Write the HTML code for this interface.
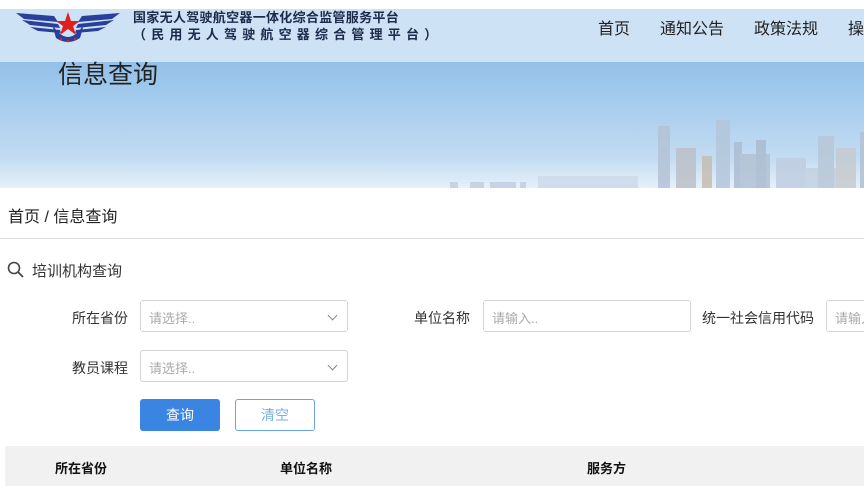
<!DOCTYPE html>
<html><head><meta charset="utf-8"><style>
*{margin:0;padding:0;box-sizing:border-box}
body{width:864px;height:486px;overflow:hidden;background:#fff;font-family:"Liberation Sans","Noto Sans CJK SC",sans-serif;color:#333;position:relative}
.abs{position:absolute}
.banner{left:0;top:9px;width:864px;height:179px;background:linear-gradient(#94c0e8 53px,#9fc8ec 80px,#c3dcf2 150px,#e6f0fa 179px)}
.hdr{left:0;top:9px;width:864px;height:53px;background:#cde2f5}
.t1{left:133px;top:7px;font-size:13px;font-weight:bold;color:#1d2a4a;letter-spacing:0.3px;white-space:nowrap}
.t2{left:133px;top:24px;font-size:13px;font-weight:bold;color:#1d2a4a;letter-spacing:5.2px;white-space:nowrap}
.nav{top:15px;font-size:16px;color:#222}
.box{border:1px solid #d4d4d4;border-radius:3px;height:32px;font-size:13px;color:#aaa;padding:7px 8px;background:#fff}
.lbl{font-size:14px;color:#333;text-align:right}
.arr{position:absolute;right:11px;top:11px;width:7px;height:7px;border-right:1.3px solid #888;border-bottom:1.3px solid #888;transform:rotate(45deg)}
.th{top:458px;font-size:13px;font-weight:bold;color:#111}
</style></head><body>
<div class="abs banner"></div>
<div class="abs hdr"></div>
<svg class="abs" style="left:14px;top:10px" width="108" height="34" viewBox="0 0 108 34">
<path d="M2 3 L40 6 L44 12 L10 9Z M8 10 L44 14 L46 18 L16 15Z M16 17 L46 20 L47 23 L24 21Z" fill="#2a3f9a"/>
<path d="M106 3 L68 6 L64 12 L98 9Z M100 10 L64 14 L62 18 L92 15Z M92 17 L62 20 L61 23 L84 21Z" fill="#2a3f9a"/>
<path d="M38 14 Q54 40 70 14 L66 28 Q54 36 42 28Z" fill="#2a3f9a"/>
<path d="M54 2 L57 11 L66 11 L59 16 L62 25 L54 19 L46 25 L49 16 L42 11 L51 11Z" fill="#e02020"/>
<circle cx="47" cy="29" r="1.3" fill="#e02020"/><circle cx="54" cy="31" r="1.3" fill="#e02020"/><circle cx="61" cy="29" r="1.3" fill="#e02020"/>
</svg>
<div class="abs t1">国家无人驾驶航空器一体化综合监管服务平台</div>
<div class="abs t2">（民用无人驾驶航空器综合管理平台）</div>
<div class="abs nav" style="left:598px">首页</div>
<div class="abs nav" style="left:660px">通知公告</div>
<div class="abs nav" style="left:754px">政策法规</div>
<div class="abs nav" style="left:848px">操</div>
<div class="abs" style="left:58px;top:55px;font-size:25px;color:#222">信息查询</div>
<svg class="abs" style="left:440px;top:118px" width="424" height="70" viewBox="0 0 424 70" opacity="0.85">
<g fill="#c0cfe0">
<rect x="10" y="64" width="8" height="6"/><rect x="30" y="64" width="14" height="6"/><rect x="50" y="64" width="26" height="6"/><rect x="80" y="64" width="6" height="6"/>
<rect x="98" y="58" width="100" height="12" fill="#cddbea"/>
<rect x="218" y="8" width="12" height="62" fill="#b3c3d6"/><rect x="236" y="30" width="20" height="40" fill="#bcc0c8"/>
<rect x="262" y="38" width="10" height="32" fill="#c6bdb2"/><rect x="276" y="2" width="14" height="68" fill="#b4c6da"/>
<rect x="294" y="24" width="8" height="46" fill="#abbdd2"/><rect x="300" y="36" width="30" height="34" fill="#b2c2d4"/>
<rect x="316" y="22" width="10" height="48" fill="#aabcd0"/><rect x="336" y="40" width="30" height="30" fill="#bfcee0"/>
<rect x="366" y="50" width="30" height="20" fill="#c2d2e2"/><rect x="378" y="18" width="16" height="52" fill="#b8c7d8"/>
<rect x="396" y="30" width="20" height="40" fill="#c6cbcf"/><rect x="420" y="14" width="4" height="56" fill="#b3c2d4"/>
</g></svg>
<div class="abs" style="left:8px;top:203px;font-size:16px;color:#222">首页 / 信息查询</div>
<div class="abs" style="left:0;top:238px;width:864px;height:1px;background:#ddd"></div>
<svg class="abs" style="left:7px;top:261px" width="18" height="18" viewBox="0 0 18 18"><circle cx="7" cy="7" r="5.5" fill="none" stroke="#444" stroke-width="1.6"/><path d="M11 11 L16 16" stroke="#444" stroke-width="1.8"/></svg>
<div class="abs" style="left:32px;top:260px;font-size:15px;color:#333">培训机构查询</div>
<div class="abs lbl" style="left:40px;top:308px;width:88px">所在省份</div>
<div class="abs box" style="left:140px;top:300px;width:208px">请选择..<span class="arr"></span></div>
<div class="abs lbl" style="left:380px;top:308px;width:90px">单位名称</div>
<div class="abs box" style="left:483px;top:300px;width:208px">请输入..</div>
<div class="abs lbl" style="left:690px;top:308px;width:124px">统一社会信用代码</div>
<div class="abs box" style="left:826px;top:300px;width:60px">请输入</div>
<div class="abs lbl" style="left:40px;top:358px;width:88px">教员课程</div>
<div class="abs box" style="left:140px;top:350px;width:208px">请选择..<span class="arr"></span></div>
<div class="abs" style="left:140px;top:399px;width:80px;height:32px;background:#3a85e2;border-radius:3px;color:#fff;font-size:14px;text-align:center;line-height:32px">查询</div>
<div class="abs" style="left:235px;top:399px;width:80px;height:32px;border:1px solid #6aa4ec;border-radius:3px;color:#7aaee9;font-size:14px;text-align:center;line-height:30px">清空</div>
<div class="abs" style="left:5px;top:446px;width:859px;height:40px;background:#f1f1f1"></div>
<div class="abs th" style="left:55px">所在省份</div>
<div class="abs th" style="left:280px">单位名称</div>
<div class="abs th" style="left:587px">服务方</div>
</body></html>
